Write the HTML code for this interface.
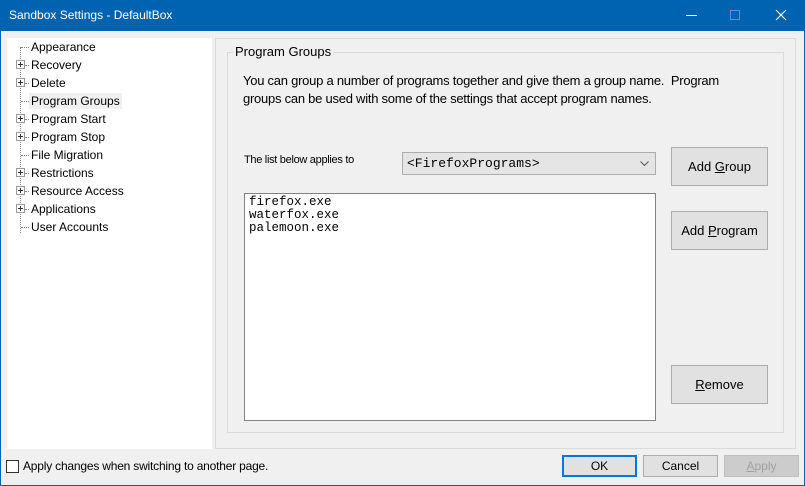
<!DOCTYPE html>
<html><head><style>
*{margin:0;padding:0;box-sizing:border-box}
body{width:805px;height:486px;background:#0063b1;font-family:"Liberation Sans",sans-serif;font-size:12px;color:#000;position:relative;overflow:hidden}
.win{position:absolute;left:1px;top:31px;width:803px;height:454px;background:#f0f0f0}
.title{position:absolute;left:9px;top:8px;color:#fff;font-size:12px}
.abs{position:absolute}
.tree{left:6px;top:7px;width:205px;height:411px;background:#fff}
.item{position:absolute;left:22px;height:16px;line-height:16px;padding:0 2px}
.dot{position:absolute;border-top:1px dotted #888;width:8px}
.pb{position:absolute;width:9px;height:9px;border:1px solid #999;background:#fff}
.pb:before{content:"";position:absolute;left:1px;top:3px;width:5px;height:1px;background:#333}
.pb:after{content:"";position:absolute;left:3px;top:1px;width:1px;height:5px;background:#333}
.btn{position:absolute;background:#e1e1e1;border:1px solid #adadad;text-align:center;font-size:13px}
</style></head><body>
<div class="title">Sandbox Settings - DefaultBox</div>
<div class="abs" style="left:686px;top:15px;width:11px;height:1px;background:#fff"></div>
<div class="abs" style="left:730px;top:10px;width:10px;height:10px;border:1px solid #5d93c6"></div>
<svg class="abs" style="left:775px;top:9px" width="12" height="12"><path d="M1 1L11 11M11 1L1 11" stroke="#fff" stroke-width="1.2"/></svg>
<div class="win">
 <div class="abs tree">
  <div class="abs" style="left:13px;top:9px;height:186px;border-left:1px dotted #888"></div>
  <div class="dot" style="left:14px;top:9px"></div><div class="item" style="top:1px">Appearance</div>
  <div class="pb" style="left:9px;top:22px"></div><div class="dot" style="left:18px;top:27px;width:4px"></div><div class="item" style="top:19px">Recovery</div>
  <div class="pb" style="left:9px;top:40px"></div><div class="dot" style="left:18px;top:45px;width:4px"></div><div class="item" style="top:37px">Delete</div>
  <div class="dot" style="left:14px;top:63px"></div><div class="item" style="top:55px;background:#f0f0f0">Program Groups</div>
  <div class="pb" style="left:9px;top:76px"></div><div class="dot" style="left:18px;top:81px;width:4px"></div><div class="item" style="top:73px">Program Start</div>
  <div class="pb" style="left:9px;top:94px"></div><div class="dot" style="left:18px;top:99px;width:4px"></div><div class="item" style="top:91px">Program Stop</div>
  <div class="dot" style="left:14px;top:117px"></div><div class="item" style="top:109px">File Migration</div>
  <div class="pb" style="left:9px;top:130px"></div><div class="dot" style="left:18px;top:135px;width:4px"></div><div class="item" style="top:127px">Restrictions</div>
  <div class="pb" style="left:9px;top:148px"></div><div class="dot" style="left:18px;top:153px;width:4px"></div><div class="item" style="top:145px">Resource Access</div>
  <div class="pb" style="left:9px;top:166px"></div><div class="dot" style="left:18px;top:171px;width:4px"></div><div class="item" style="top:163px">Applications</div>
  <div class="dot" style="left:14px;top:189px"></div><div class="item" style="top:181px">User Accounts</div>
 </div>
 <div class="abs" style="left:214px;top:7px;width:581px;height:411px;border:1px solid #dadada"></div>
 <div class="abs" style="left:226px;top:21px;width:557px;height:381px;border:1px solid #dadada"></div>
 <div class="abs" style="left:232px;top:13px;background:#f0f0f0;padding:0 2px;font-size:13px">Program Groups</div>
 <div class="abs" style="left:242px;top:41px;font-size:13px;line-height:18px;width:515px;letter-spacing:-0.25px">You can group a number of programs together and give them a group name.&nbsp; Program groups can be used with some of the settings that accept program names.</div>
 <div class="abs" style="left:243px;top:123px;font-size:11px;letter-spacing:-0.3px">The list below applies to</div>
 <div class="abs" style="left:401px;top:121px;width:254px;height:23px;background:#e5e5e5;border:1px solid #adadad;font-family:'Liberation Mono',monospace;font-size:13px;line-height:21px;padding-left:4px">&lt;FirefoxPrograms&gt;<svg class="abs" style="right:6px;top:8px" width="9" height="6"><path d="M0.5 0.5L4.5 4.5L8.5 0.5" stroke="#555" fill="none"/></svg></div>
 <div class="btn" style="left:670px;top:116px;width:97px;height:39px;line-height:37px">Add <u>G</u>roup</div>
 <div class="abs" style="left:243px;top:162px;width:412px;height:228px;background:#fff;border:1px solid #828282;font-family:'Liberation Mono',monospace;font-size:12.5px;line-height:13px;padding:2px 4px">firefox.exe<br>waterfox.exe<br>palemoon.exe</div>
 <div class="btn" style="left:670px;top:180px;width:97px;height:39px;line-height:37px">Add <u>P</u>rogram</div>
 <div class="btn" style="left:670px;top:334px;width:97px;height:39px;line-height:37px"><u>R</u>emove</div>
 <div class="abs" style="left:5px;top:429px;width:13px;height:13px;border:1px solid #333;background:#fff"></div>
 <div class="abs" style="left:22px;top:428px;font-size:12px;letter-spacing:-0.2px">Apply changes when switching to another page.</div>
 <div class="btn" style="left:561px;top:424px;width:75px;height:22px;line-height:19px;border:2px solid #0078d7;font-size:12px">OK</div>
 <div class="btn" style="left:642px;top:424px;width:75px;height:22px;line-height:20px;font-size:12px">Cancel</div>
 <div class="btn" style="left:723px;top:424px;width:75px;height:22px;line-height:20px;font-size:12px;color:#a0a0a0;background:#ccc;border-color:#bfbfbf"><u>A</u>pply</div>
</div>
</body></html>
